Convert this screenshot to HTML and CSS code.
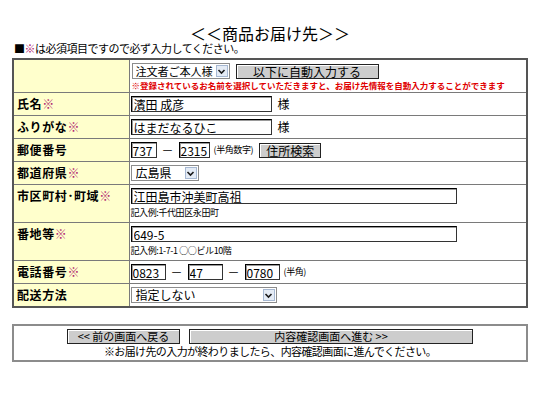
FILE: index.html
```html
<!DOCTYPE html>
<html lang="ja">
<head>
    <meta charset="UTF-8">
    <meta name="viewport" content="width=device-width, initial-scale=1.0">
    <title>商品お届け先</title>
    <link rel="stylesheet" href="styles.css">
</head>
<body>
    <div class="page">
        <h1 class="title">＜＜商品お届け先＞＞</h1>
        <p class="lead">■<span class="req">※</span>は必須項目ですので必ず入力してください。</p>

        <table class="form-table">
            <tr class="row-auto">
                <th></th>
                <td>
                    <div class="line">
                        <span class="select sel-person">
                            <select><option>注文者ご本人様</option></select>
                            <span class="arrow"><svg width="9" height="9" viewBox="0 0 9 9"><path d="M1.5 3 L4.5 6 L7.5 3" fill="none" stroke="#1a1a1a" stroke-width="1.6"/></svg></span>
                        </span>
                        <button class="btn btn-auto">以下に自動入力する</button>
                    </div>
                    <div class="warn">※登録されているお名前を選択していただきますと、お届け先情報を自動入力することができます</div>
                </td>
            </tr>
            <tr>
                <th>氏名<span class="req">※</span></th>
                <td><div class="line"><input class="text w-name" type="text" value="濱田 成彦"><span class="suffix">様</span></div></td>
            </tr>
            <tr>
                <th>ふりがな<span class="req">※</span></th>
                <td><div class="line"><input class="text w-name" type="text" value="はまだなるひこ"><span class="suffix">様</span></div></td>
            </tr>
            <tr>
                <th>郵便番号</th>
                <td>
                    <div class="line">
                        <input class="text w-zip1" type="text" value="737">
                        <span class="dash">－</span>
                        <input class="text w-zip2" type="text" value="2315">
                        <span class="small">(半角数字)</span>
                        <button class="btn btn-zip">住所検索</button>
                    </div>
                </td>
            </tr>
            <tr>
                <th>都道府県<span class="req">※</span></th>
                <td>
                    <div class="line">
                        <span class="select sel-pref">
                            <select><option>広島県</option></select>
                            <span class="arrow"><svg width="9" height="9" viewBox="0 0 9 9"><path d="M1.5 3 L4.5 6 L7.5 3" fill="none" stroke="#1a1a1a" stroke-width="1.6"/></svg></span>
                        </span>
                    </div>
                </td>
            </tr>
            <tr>
                <th>市区町村･町域<span class="req">※</span></th>
                <td>
                    <div class="line"><input class="text w-long" type="text" value="江田島市沖美町高祖"></div>
                    <div class="note">記入例:千代田区永田町</div>
                </td>
            </tr>
            <tr>
                <th>番地等<span class="req">※</span></th>
                <td>
                    <div class="line"><input class="text w-long" type="text" value="649-5"></div>
                    <div class="note">記入例:1-7-1 ○○ビル10階</div>
                </td>
            </tr>
            <tr>
                <th>電話番号<span class="req">※</span></th>
                <td>
                    <div class="line">
                        <input class="text w-tel" type="text" value="0823">
                        <span class="dash">－</span>
                        <input class="text w-tel" type="text" value="47">
                        <span class="dash">－</span>
                        <input class="text w-tel" type="text" value="0780">
                        <span class="small">(半角)</span>
                    </div>
                </td>
            </tr>
            <tr>
                <th>配送方法</th>
                <td>
                    <div class="line">
                        <span class="select sel-ship">
                            <select><option>指定しない</option></select>
                            <span class="arrow"><svg width="9" height="9" viewBox="0 0 9 9"><path d="M1.5 3 L4.5 6 L7.5 3" fill="none" stroke="#1a1a1a" stroke-width="1.6"/></svg></span>
                        </span>
                    </div>
                </td>
            </tr>
        </table>

        <div class="nav-box">
            <div class="nav-buttons">
                <button class="btn btn-back">&lt;&lt; 前の画面へ戻る</button>
                <button class="btn btn-next">内容確認画面へ進む &gt;&gt;</button>
            </div>
            <p class="nav-text">※お届け先の入力が終わりましたら、内容確認画面に進んでください。</p>
        </div>
    </div>
</body>
</html>
```

FILE: styles.css
```css
* {
    box-sizing: border-box;
}

body {
    margin: 0;
    background: #fff;
    color: #000;
    font-family: "Noto Sans CJK JP", "Noto Sans", sans-serif;
}

.page {
    width: 516px;
    margin-left: 12px;
    padding-top: 25px;
}

.title {
    margin: 0;
    font-size: 16px;
    font-weight: normal;
    line-height: 16px;
    text-align: center;
}

.lead {
    margin: 0 0 2px 2px;
    font-size: 11px;
    line-height: 15px;
    letter-spacing: -0.5px;
}

.req {
    color: #b02470;
    font-weight: bold;
}

/* form table */
.form-table {
    width: 516px;
    border-collapse: collapse;
    border: 2px solid #555;
}

.form-table th,
.form-table td {
    border: 1px solid #7a7a7a;
    vertical-align: top;
}

.form-table th {
    width: 116px;
    padding: 3px 0 0 3px;
    background: #ffffcc;
    font-size: 12px;
    line-height: 16px;
    font-weight: bold;
    text-align: left;
    letter-spacing: 0.6px;
    white-space: nowrap;
}

.form-table td {
    padding: 3px 2px 3px 1px;
    font-size: 12px;
    line-height: 16px;
}

.form-table .row-auto td {
    padding: 3px 2px 1px 2px;
}

.line {
    display: flex;
    align-items: center;
    height: 16px;
}

.text {
    height: 16px;
    padding: 0 2px;
    border: 1px solid #333;
    border-top-color: #000;
    border-left-color: #000;
    box-shadow: inset 1px 1px 0 #9a9a9a;
    font-family: inherit;
    font-size: 12px;
    line-height: 14px;
    color: #000;
    background: #fff;
}

.w-name { width: 141px; }
.w-zip1 { width: 26px; padding: 0 1px; }
.w-zip2 { width: 31px; padding: 0 1px; }
.w-long { width: 326px; }
.w-tel { width: 35px; padding: 0 1px; }

.suffix {
    margin-left: 6px;
}

.dash {
    width: 22px;
    text-align: center;
}

.small {
    margin-left: 4px;
    font-size: 9px;
    letter-spacing: -0.4px;
}

.note {
    margin-top: 2px;
    font-size: 9px;
    line-height: 13px;
    letter-spacing: -0.4px;
}

.warn {
    margin-top: 1px;
    color: #e00000;
    font-size: 8.5px;
    line-height: 11px;
    font-weight: bold;
    white-space: nowrap;
}

/* selects */
.select {
    position: relative;
    display: inline-block;
    height: 16px;
}

.select select {
    appearance: none;
    -webkit-appearance: none;
    height: 16px;
    padding: 0 15px 0 4px;
    border: 1px solid #8c8c8c;
    border-radius: 0;
    background: #fff;
    font-family: inherit;
    font-size: 12px;
    line-height: 14px;
    color: #000;
}

.select .arrow {
    position: absolute;
    top: 2px;
    right: 2px;
    width: 12px;
    height: 12px;
    display: flex;
    align-items: center;
    justify-content: center;
    border: 1px solid #a6b8d2;
    background: #e4ebf5;
    pointer-events: none;
}

.sel-person select {
    width: 98px;
    padding-left: 3px;
    font-size: 11.2px;
    letter-spacing: -0.2px;
}

.sel-pref select { width: 68px; }
.sel-ship select { width: 146px; }

/* buttons */
.btn {
    height: 15px;
    padding: 0;
    border: 1px solid #222;
    background: #cdcdcd;
    box-shadow: inset 1px 1px 0 #fff;
    font-family: inherit;
    font-size: 12px;
    line-height: 13px;
    color: #000;
    cursor: pointer;
}

.btn-auto {
    width: 143px;
    margin-left: 6px;
}

.btn-zip {
    width: 62px;
    margin-left: 6px;
}

/* bottom navigation */
.nav-box {
    margin-top: 16px;
    padding: 3px 0 2px;
    border: 2px solid #8c8c8c;
    text-align: center;
}

.nav-buttons {
    display: flex;
    justify-content: center;
    gap: 9px;
}

.nav-buttons .btn {
    height: 15px;
    font-size: 11px;
}

.btn-back { width: 113px; }
.btn-next { width: 284px; }

.nav-text {
    margin: 0;
    font-size: 11px;
    line-height: 14px;
    letter-spacing: -0.6px;
}
```
